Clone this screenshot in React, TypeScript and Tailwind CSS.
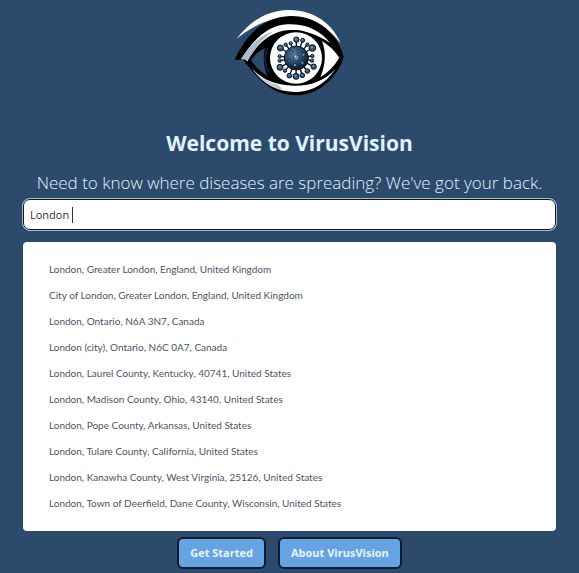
import { useState } from "react";

const places = [
  "London, Greater London, England, United Kingdom",
  "City of London, Greater London, England, United Kingdom",
  "London, Ontario, N6A 3N7, Canada",
  "London (city), Ontario, N6C 0A7, Canada",
  "London, Laurel County, Kentucky, 40741, United States",
  "London, Madison County, Ohio, 43140, United States",
  "London, Pope County, Arkansas, United States",
  "London, Tulare County, California, United States",
  "London, Kanawha County, West Virginia, 25126, United States",
  "London, Town of Deerfield, Dane County, Wisconsin, United States",
];

// Spikes around the virus body: tip x, tip y, knob radius.
const spikes = [
  [214, 119, 8], [233, 121, 6], [262, 144, 10], [262, 168, 5], [261, 182, 5],
  [266, 200, 8], [247, 213, 7], [232, 226, 7], [213, 229, 9], [193, 227, 7],
  [180, 212, 5], [165, 202, 9], [164, 182, 5], [164, 169, 5], [166, 144, 9],
  [182, 134, 5], [197, 130, 5], [247, 134, 5],
];

function Logo() {
  return (
    <svg viewBox="0 0 390 315" className="h-[105px] w-[130px]" role="img" aria-label="VirusVision">
      <defs>
        <radialGradient id="body" cx="40%" cy="35%" r="70%">
          <stop offset="0" stopColor="#5b87ad" />
          <stop offset="0.5" stopColor="#29496c" />
          <stop offset="1" stopColor="#07111f" />
        </radialGradient>
      </defs>
      <path d="M34 117C80 60 125 32 190 30C267 28 325 74 347 130C304 78 260 50 199 52C136 52 85 76 34 117Z" fill="#fff" />
      <path d="M29 179C57 119 105 50 197 48C276 47 338 99 356 170C344 218 292 286 210 286C139 286 98 235 55 180Z" fill="#000" />
      <path d="M48 178C79 129 123 75 188 73C248 69 291 98 315 128C280 106 243 91 205 90C148 88 100 122 67 184L60 178Z" fill="#fff" />
      <path d="M48 178C72 139 101 108 146 94C112 115 86 148 67 184L60 178Z" fill="#a9bccd" />
      <path d="M78 181C90 163 105 150 120 144C113 171 116 200 127 227C106 215 90 199 78 181Z" fill="#2c4a6b" />
      <path d="M291 123C313 137 330 153 343 173C327 199 311 216 286 231C302 197 304 155 291 123Z" fill="#fff" />
      <path d="M81 205C109 236 145 255 207 257C257 258 300 242 331 207C304 247 265 277 207 276C148 274 111 248 81 205Z" fill="#fff" />
      <path d="M81 205C101 231 126 246 159 254L175 271C137 262 107 241 81 205Z" fill="#b9cad8" />
      <ellipse cx="212" cy="173" rx="83" ry="82" fill="#000" />
      <path d="M128 143C117 170 120 198 132 218" fill="none" stroke="#182735" strokeWidth="5" />
      <ellipse cx="213" cy="174" rx="78" ry="77" fill="#fff" />
      {spikes.map(([x, y, r]) => (
        <g key={`${x}-${y}`} stroke="#09131f">
          <line x1="214" y1="174" x2={x} y2={y} strokeWidth="4" />
          <circle cx={x} cy={y} r={r} fill="#35597d" strokeWidth="3" />
          <circle cx={x - 1} cy={y - 2} r={r / 3} fill="#7b9fbd" stroke="none" />
        </g>
      ))}
      <circle cx="214" cy="174" r="36" fill="url(#body)" stroke="#06101c" strokeWidth="3" />
      <g fill="#5f8cb0" stroke="#0a1828" strokeWidth="2">
        <circle cx="214" cy="173" r="9" />
        <circle cx="199" cy="157" r="5" />
        <circle cx="219" cy="154" r="4" />
        <circle cx="235" cy="164" r="5" />
        <circle cx="232" cy="188" r="5" />
        <circle cx="210" cy="195" r="5" />
        <circle cx="193" cy="182" r="4" />
      </g>
      <circle cx="211" cy="169" r="3" fill="#b4d0e4" />
    </svg>
  );
}

export default function App() {
  const [query, setQuery] = useState("London ");
  const [focused, setFocused] = useState(false);
  const button =
    "h-8 rounded-md border-2 border-[#0b1b30] bg-[#66a3e3] px-[11px] text-[11px] leading-4 font-bold text-[#e6f4ff]";

  return (
    <main className="flex min-h-screen flex-col items-center bg-[#2c4a6b] px-[22px] pb-1 font-['Open_Sans','Noto_Sans',sans-serif] text-[#e0f2ff]">
      <Logo />
      <h1 className="mt-[22px] text-[21px] leading-8 font-bold">Welcome to VirusVision</h1>
      <label htmlFor="place" className="mt-[10px] text-[17px] leading-7 font-[340] whitespace-nowrap">
        Need to know where diseases are spreading? We've got your back.
      </label>
      <div className="relative mt-px w-full text-[11px] text-[#333]">
        <input
          id="place"
          type="text"
          autoComplete="off"
          value={query}
          onChange={(e) => setQuery(e.target.value)}
          onFocus={() => setFocused(true)}
          onBlur={() => setFocused(false)}
          className="block h-[33px] w-full rounded-lg border border-[#b4babf] bg-white px-[7px] outline-1 -outline-offset-2 outline-[#101820]"
        />
        {!focused && (
          <span aria-hidden="true" className="pointer-events-none absolute inset-y-0 left-2 flex items-center whitespace-pre">
            <span className="invisible">{query}</span>
            <span className="h-4 w-px bg-[#333]" />
          </span>
        )}
      </div>
      <div className="mt-[11px] w-full px-px">
        <ul className="rounded-sm bg-white px-[26px] pt-[14px] pb-[15px] font-['Lato',sans-serif] text-[10px] leading-[26px] text-[#4b5563]">
          {places.map((place) => (
            <li key={place}>
              <button type="button" onClick={() => setQuery(place)} className="block w-full text-left">
                {place}
              </button>
            </li>
          ))}
        </ul>
      </div>
      <div className="mt-1.5 flex gap-3">
        <button type="button" className={button}>Get Started</button>
        <button type="button" className={button}>About VirusVision</button>
      </div>
    </main>
  );
}
